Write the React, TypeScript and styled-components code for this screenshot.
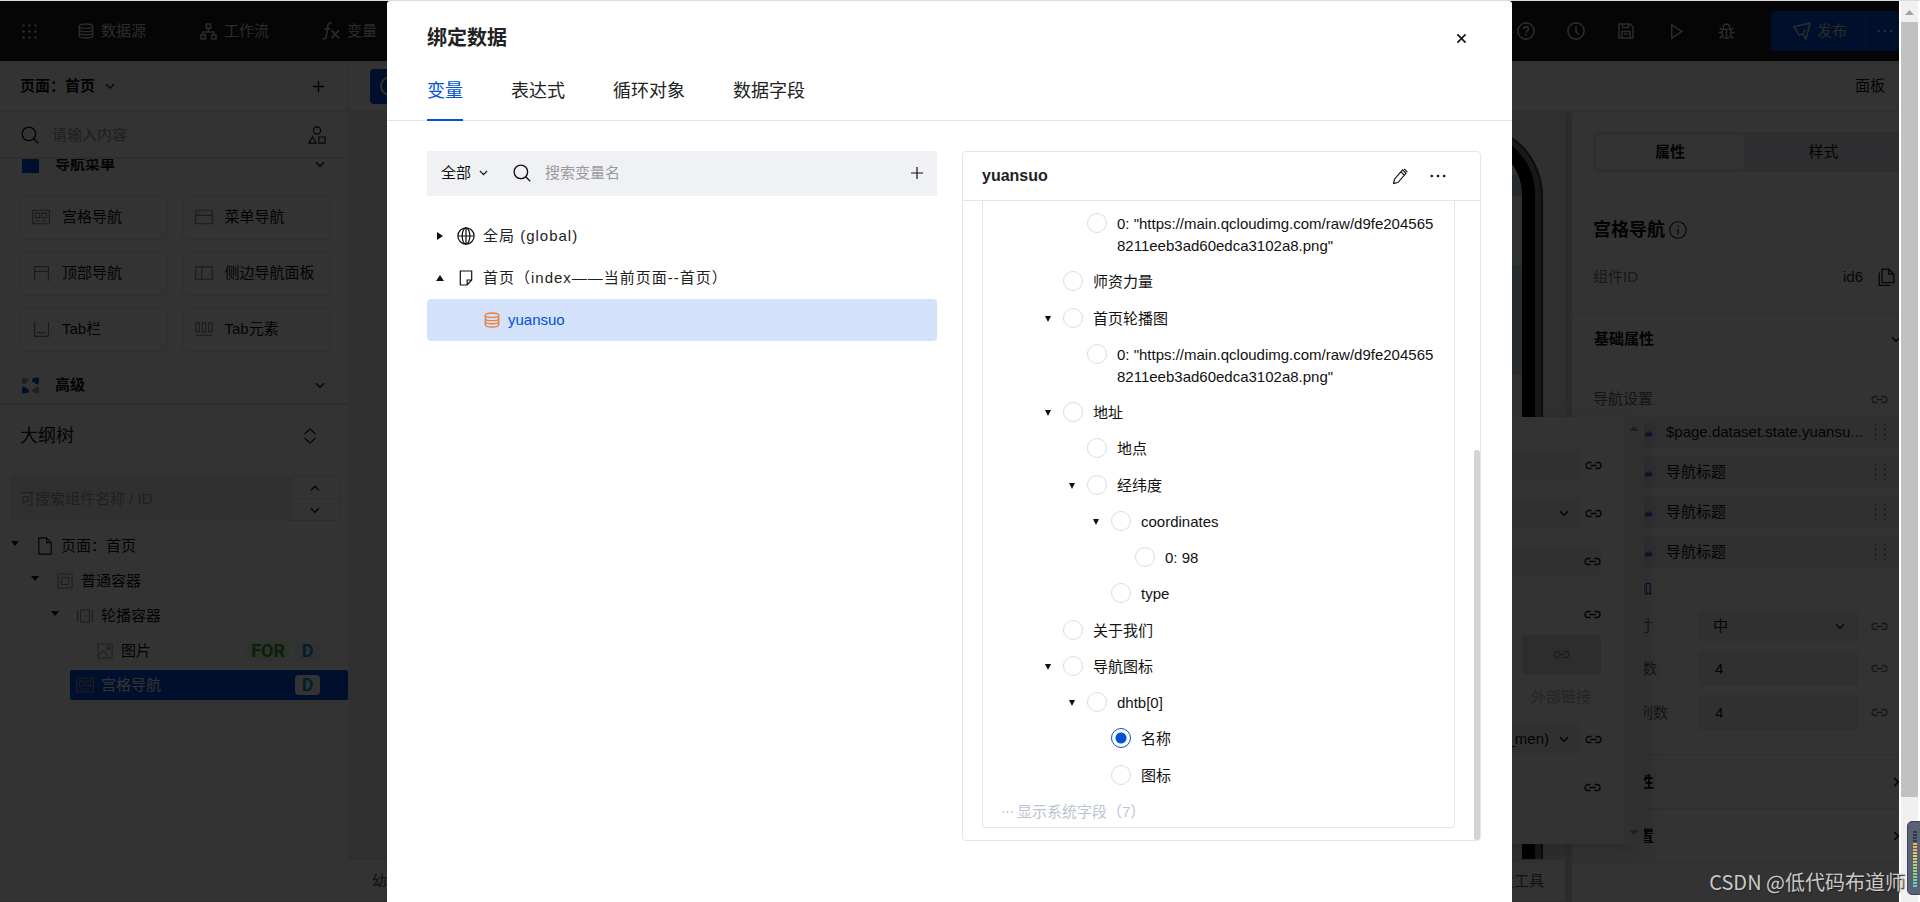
import React, { useState } from 'react';
import styled, { createGlobalStyle, css } from 'styled-components';

const sans = `"Liberation Sans", "Noto Sans CJK SC", sans-serif`;
const blue = '#0052d9';
const line = '#e3e5e9';

const GlobalStyle = createGlobalStyle`
  *, *::before, *::after { box-sizing: border-box; }
  body { margin: 0; font: 15px/22px ${sans}; color: #111; background: #fff; }
  button, input, select { font: inherit; color: inherit; margin: 0; }
  button { border: 0; padding: 0; background: none; display: inline-flex; align-items: center; cursor: pointer; }
  svg { display: block; flex: none; }
`;

/* ---------- icons ---------- */

const Svg = styled.svg.attrs({ fill: 'none', stroke: 'currentColor', 'aria-hidden': true })``;

type IconProps = { size?: number; w?: number };

const make = (body: React.ReactNode, base = 16, weight = 1.2) =>
  function Icon({ size = base, w = weight }: IconProps) {
    return (
      <Svg width={size} height={size} viewBox="0 0 16 16" strokeWidth={w}>
        {body}
      </Svg>
    );
  };

const ChevronDown = make(<path d="M3.5 6 8 10.5 12.500 6" />, 14, 1.6);
const ChevronUp = make(<path d="M3.500 10.500 8 6l4.500 4.500" />, 14, 1.6);
const ChevronRight = make(<path d="M6 3.500 10.500 8 6 12.500" />, 14, 1.8);
const PlusIcon = make(<path d="M8 2v12M2 8h12" />, 16);
const CloseIcon = make(<path d="m3 3 10 10M13 3 3 13" />, 13, 2);
const SearchIcon = make(<><circle cx="7" cy="7" r="6" /><path d="m11.300 11.300 4 4" /></>, 18, 1.2);
const DatabaseIcon = make(
  <>
    <ellipse cx="8" cy="3.200" rx="6.700" ry="2.200" />
    <path d="M1.300 3.200v9.600C1.300 14 4.300 15 8 15s6.700-1 6.700-2.200V3.200M1.300 6.400c0 1.200 3 2.200 6.700 2.200s6.700-1 6.700-2.200M1.300 9.600c0 1.200 3 2.200 6.700 2.200s6.700-1 6.700-2.200" />
  </>, 16, 1.4);
const FlowIcon = make(
  <>
    <path d="M6 1h4v4H6zM1 11h4v4H1zM11 11h4v4h-4zM8 5v3.500M3 11V8.500h10V11" />
  </>, 17, 1.5);
const FxIcon = make(
  <path d="M8.500 1C6.500.500 5.500 1.500 5.200 3.500L3.800 12.500C3.500 14.800 2.300 15.400.500 14.800M2 6h5.500M8.500 7.500l6.500 7M15 7.500l-6.500 7" />, 18, 1.5);
const ShapesIcon = make(
  <path d="M8 .800a3.200 3.200 0 1 1 0 6.400 3.200 3.200 0 0 1 0-6.400ZM.800 15.200 4 9.500l3.200 5.700ZM9.600 9.800h5.600v5.400H9.600Z" />, 18, 1);
const HelpIcon = make(
  <><circle cx="8" cy="8" r="7.200" /><path d="M5.800 6.500c0-1.500 1-2.200 2.200-2.200s2.200.800 2.200 2c0 1.500-2.200 1.700-2.200 3.300M8 10.700v1.500" /></>, 18, 1.4);
const ClockIcon = make(<><circle cx="8" cy="8" r="7.200" /><path d="M8 3.500v4.800l2.500 3" /></>, 18, 1.4);
const SaveIcon = make(<path d="M1 1h11l3 3v11H1ZM4.500 1v3.500h6V1M4 15V8.500h8V15M6 11h4" />, 16, 1.5);
const PlayIcon = make(<path d="M3.500 1.800 13 8l-9.500 6.200Z" />, 17, 1.4);
const BugIcon = make(
  <path d="M4 6h8v4.500a4 4 0 0 1-8 0ZM5 6V4a3 3 0 0 1 6 0v2M8 6v8.500M.500 9H4M12 9h3.500M1.500 4.500 4 6.500M14.500 4.500 12 6.500M1.500 14.500 4.500 12M14.500 14.500 11.500 12" />, 17, 1.3);
const SendIcon = make(<path d="M.800 4.300 15.200 1l-3.700 14-2.700-4.500L5.500 11.500ZM5.500 11.500 .800 4.300M8.800 10.500 11 6.500" />, 18, 1.4);
const InfoIcon = make(<><circle cx="8" cy="8" r="7.300" /><path d="M8 6.800v5.200M8 3.800v1.600" /></>, 18, 1);
const CopyIcon = make(<path d="M4.500 1H10.500l4.500 4.500V13H4.500ZM10.500 1v4.500H15M2 4v11.500h10" />, 18, 1.2);
const PageIcon = make(<path d="M2.500.800h7L13.500 5v10.200h-11ZM9.500.800V5h4" />, 18, 1);
const NoteIcon = make(<path d="M2.300 1h11.400v9l-4.500 5H2.300ZM9.200 15v-5h4.500" />, 16, 1.2);
const GlobeIcon = make(
  <><circle cx="8" cy="8" r="7.200" /><ellipse cx="8" cy="8" rx="3.400" ry="7.200" /><path d="M.800 8h14.400M8 .800v14.400" /></>, 18, 1.1);
const PencilIcon = make(<path d="m1.500 14.500.800-4L10 1.800l3.200 3.200-7.700 8.700-4 .8ZM11.500.900l3 3M8.500 3.600l3 3" />, 17, 1.1);
const BoxIcon = make(<path d="M1 1h14v14H1ZM4.500 4.500h7v7h-7Z" />, 16, 1.1);
const SlideIcon = make(<path d="M3.500 2h9v12h-9ZM.600 2v12M15.400 2v12" />, 16, 1.1);
const ImageIcon = make(<><path d="M1 1h14v14H1ZM1.500 13 6 7.500l5.500 6" /><circle cx="10.800" cy="5" r="1.800" /></>, 16, 1.1);
const GridNavIcon = make(<path d="M.600 2h14.800v12H.600ZM3 4.500h4v4H3ZM9 4.500h4v4H9ZM3 11.500h4M9 11.500h4" />, 18, 1);
const MenuNavIcon = make(<path d="M.600 2h14.800v12H.600ZM.600 6.500h14.800M3 4.200h1.200M5.500 4.200h1.200" />, 18, 1);
const TopNavIcon = make(<path d="M1.500 15V1.500h13V15M1.500 6h13" />, 17, 1.1);
const SideNavIcon = make(<path d="M.600 2.500h14.800v11H.600ZM6 2.500v11" />, 18, 1);
const TabBarIcon = make(<path d="M1.500 1v13.500h13V1M4 11h8" />, 17, 1.1);
const TabItemIcon = make(<path d="M.800 2.500h3v8h-3ZM6.500 2.500h3v8h-3ZM12.200 2.500h3v8h-3ZM.500 13.500h15" />, 18, 1);
const MountainIcon = make(<path d="M1 14 5 7l3 4 2.500-6L15 14ZM2 3h2" fill="currentColor" />, 9, 1);
const SortIcon = make(<path d="M2.500 6 8 1l5.500 5M2.500 10 8 15l5.500-5" />, 16, 1.2);

const DotsIcon = () => (
  <Svg width="17" height="17" viewBox="0 0 17 17">
    {[2, 8, 14].map(y => [2, 8, 14].map(x => (
      <circle key={`${x}-${y}`} cx={x + 0.5} cy={y + 0.5} r="1.200" fill="currentColor" stroke="none" />
    )))}
  </Svg>
);
const EllipsisIcon = ({ size = 16 }: IconProps) => (
  <Svg width={size} height="4" viewBox="0 0 16 4">
    <g fill="currentColor" stroke="none">
      <circle cx="1.800" cy="2" r="1.300" /><circle cx="8" cy="2" r="1.300" /><circle cx="14.200" cy="2" r="1.300" />
    </g>
  </Svg>
);
const LinkIcon = () => (
  <Svg width="17" height="9" viewBox="0 0 17 9" strokeWidth="1.300">
    <path d="M6.500 1.500H4a3 3 0 0 0 0 6h2.500M10.500 1.500H13a3 3 0 0 1 0 6h-2.500M5.500 4.500h6" />
  </Svg>
);
const DragIcon = () => (
  <Svg width="12" height="18" viewBox="0 0 12 18">
    {[1, 6, 11, 16].map(y => <path key={y} d={`M1 ${y}.500h1.200M10 ${y}.500h1.200`} strokeWidth="1.200" />)}
  </Svg>
);
const Triangle = ({ dir, w = 8, h = 5 }: { dir: 'down' | 'up' | 'right'; w?: number; h?: number }) => (
  <Svg width={w} height={h} viewBox="0 0 8 8" preserveAspectRatio="none">
    <path
      d={dir === 'down' ? 'M0 0h8L4 8Z' : dir === 'up' ? 'M0 8h8L4 0Z' : 'M0 0v8l8-4Z'}
      fill="currentColor"
      stroke="none"
    />
  </Svg>
);
const PinwheelIcon = () => (
  <Svg width="17" height="17" viewBox="0 0 17 17">
    <g stroke="none">
      <path d="M0 1.500Q0 .500 1 .500L6 2 7 3.500 3 7H1L0 6Z" fill="#8fa3c6" />
      <path d="M17 15.500q0 1-1 1L11 15l-1-1.500L14 10h2l1 1Z" fill="#8fa3c6" />
      <path d="M16 .500q1 0 1 1V6l-1 1.500-2-.500L10 4V2.500L11 1Z" fill={blue} />
      <path d="M1 16.500q-1 0-1-1V11L1 9.500l2 .500L7 13v1.500L6 16Z" fill={blue} />
    </g>
  </Svg>
);

/* ---------- page frame ---------- */

const Window = styled.div`
  display: grid;
  grid-template-columns: minmax(0, 1fr) 21px;
  min-height: 100vh;
  border-top: 1px solid #dcdcdc;
  position: relative;
  overflow: hidden;
`;

const Editor = styled.div`
  position: relative;
  display: flex;
  flex-direction: column;
  overflow: hidden;
`;

const TopBar = styled.header`
  display: flex;
  align-items: center;
  justify-content: space-between;
  height: 60px;
  padding-left: 21px;
  background: #191919;
  color: #d6d6d6;
`;

const TopGroup = styled.nav`
  display: flex;
  align-items: center;
  gap: 40px;
`;

const TopLink = styled.a`
  display: flex;
  align-items: center;
  gap: 7px;
  width: 82px;
  color: inherit;
  text-decoration: none;
  white-space: nowrap;
`;

const TopActions = styled.div`
  display: flex;
  align-items: center;
`;

const TopAction = styled.button`
  width: 50px;
  height: 40px;
  justify-content: center;
`;

const Publish = styled.button`
  height: 40px;
  width: 95px;
  margin-left: 20px;
  padding-left: 4px;
  justify-content: center;
  gap: 6px;
  background: ${blue};
  border-right: 1px solid #2a62c8;
  border-radius: 4px 0 0 4px;
`;

const PublishMore = styled.button`
  height: 40px;
  width: 33px;
  padding-left: 10px;
  background: ${blue};
  overflow: hidden;
`;

const Workspace = styled.div`
  flex: 1;
  display: grid;
  grid-template-columns: 348px minmax(0, 1fr);
`;

const Sidebar = styled.aside`
  background: #fff;
  display: flex;
  flex-direction: column;
  border-bottom: 1px solid ${line};
`;

const PageSelect = styled.div`
  display: flex;
  align-items: center;
  justify-content: space-between;
  height: 51px;
  padding: 0 21px 0 20px;
  border-bottom: 1px solid #e7e7e7;
  border-right: 1px solid #e7e7e7;
  font-weight: 700;
`;

const PageButton = styled.button`
  gap: 8px;
  font-weight: 700;
`;

const SearchLine = styled.label`
  display: flex;
  align-items: center;
  gap: 12px;
  height: 47px;
  padding: 0 22px 0 21px;
  border-bottom: 2px solid #e7e7e7;
`;

const PlainInput = styled.input`
  flex: 1;
  min-width: 0;
  padding: 0 1px;
  border: 0;
  outline: 0;
  background: transparent;
  &::placeholder { color: #9a9a9a; opacity: 1; }
`;

const Library = styled.section`
  height: 246px;
  padding: 0 18px 0 20px;
  overflow: hidden;
  border-bottom: 2px solid #e7e7e7;
`;

const LibraryScroll = styled.div`
  margin-top: -20px;
`;

const Category = styled.button`
  width: 100%;
  height: 50px;
  gap: 16px;
  padding: 0 3px 0 2px;
  font-weight: 700;
  span { flex: 1; text-align: left; }
`;

const MenuSwatch = styled.i`
  width: 17px;
  height: 18px;
  background: ${blue};
`;

const Cards = styled.div`
  display: grid;
  grid-template-columns: 1fr 1fr;
  gap: 12px 15px;
  padding: 7px 0 8px;
`;

const Card = styled.button`
  height: 44px;
  gap: 12px;
  padding: 0 0 2px 11px;
  border: 1px solid #e4e6ea;
  border-radius: 4px;
  white-space: nowrap;
  svg { color: #84878f; }
`;

const CardGlyph = styled.i`
  display: flex;
  justify-content: center;
  width: 18px;
`;

const OutlineHead = styled.div`
  display: flex;
  align-items: center;
  justify-content: space-between;
  height: 61px;
  padding: 1px 30px 0 20px;
  font-size: 18px;
`;

const OutlineSearch = styled.div`
  display: grid;
  grid-template-columns: 1fr 50px;
  height: 45px;
  margin: 10px 8px 7px 10px;
`;

const OutlineInput = styled.input`
  min-width: 0;
  padding: 0 10px;
  border: 0;
  border-radius: 4px 0 0 4px;
  background: #f1f1f1;
  &::placeholder { color: #9a9a9a; opacity: 1; }
`;

const Stepper = styled.div`
  display: grid;
  border: 1px solid #e0e0e0;
  button { justify-content: center; }
  button + button { border-top: 1px solid #e0e0e0; }
`;

const OutlineTree = styled.ul`
  list-style: none;
  margin: 0;
  padding: 0;
`;

const OutlineRow = styled.li<{ $level: number; $selected?: boolean }>`
  display: flex;
  align-items: center;
  height: ${p => (p.$selected ? 30 : 35)}px;
  gap: 7px;
  padding-right: 28px;
  padding-left: ${p => p.$level * 20 + 11}px;
  margin-top: ${p => (p.$selected ? 2 : 0)}px;
  ${p => p.$selected && css`
    margin-left: 70px;
    padding-left: 6px;
    background: ${blue};
    color: #fff;
    border-radius: 2px;
  `}
`;

const CaretSlot = styled.i`
  display: flex;
  width: 18px;
  margin-bottom: 4px;
`;

const OutlineName = styled.span`
  flex: 1;
`;

const OutlineGlyph = styled.i<{ $muted?: boolean }>`
  display: flex;
  justify-content: center;
  width: 18px;
  color: ${p => (p.$muted ? '#8b8f9a' : 'inherit')};
`;

const Tag = styled.b<{ $tone: 'green' | 'blue' | 'solid' }>`
  padding: 0 5px;
  min-width: 25px;
  text-align: center;
  line-height: 20px;
  font-family: "Liberation Sans Narrow", Roboto, sans-serif;
  font-size: 18px;
  border-radius: 4px;
  margin-left: -2px;
  color: ${p => (p.$tone === 'green' ? '#2ba52b' : '#0899d6')};
  background: ${p => (p.$tone === 'green' ? '#eef8ee' : p.$tone === 'blue' ? '#edf3fb' : '#fff')};
`;

/* ---------- canvas ---------- */

const Main = styled.div`
  display: grid;
  grid-template-rows: 51px minmax(0, 1fr);
  min-width: 0;
`;

const CanvasBar = styled.div`
  display: flex;
  align-items: center;
  justify-content: space-between;
  padding: 0 14px 0 22px;
  background: #fff;
  border-bottom: 1px solid #e7e7e7;
`;

const RunButton = styled.button`
  width: 120px;
  height: 35px;
  padding-left: 10px;
  border-radius: 4px;
  color: #fff;
  background: ${blue};
`;

const Split = styled.div`
  display: grid;
  grid-template-columns: minmax(0, 1fr) 6px 328px;
`;

const CanvasColumn = styled.div`
  display: grid;
  grid-template-rows: minmax(0, 1fr) 43px;
  background: #ededed;
`;

const Stage = styled.div`
  display: flex;
  justify-content: flex-end;
  padding: 12px 22px 0 0;
  overflow: hidden;
`;

const Phone = styled.div`
  width: 500px;
  border: 2px solid #3c3c46;
  border-bottom: 0;
  border-radius: 72px 72px 0 0;
  background: #777;
  padding: 6px 6px 0;
`;

const PhoneScreen = styled.div`
  height: 100%;
  border: solid #000;
  border-width: 13px 13px 0;
  border-radius: 62px 62px 0 0;
  background: linear-gradient(#fff 30px, #b9dbe0 30px 51px, #f4f8fa 51px 120px, #bfe0e4 120px 230px, #fafafa 230px);
`;

const Crumbs = styled.div`
  display: flex;
  align-items: center;
  justify-content: space-between;
  padding: 0 21px 0 24px;
  background: #fff;
  border-top: 1px solid #ddd;
  border-bottom: 1px solid ${line};
  color: #555;
`;

const Divider = styled.div`
  background: #dcdcdc;
  border-radius: 4px 4px 0 0;
`;

/* ---------- inspector ---------- */

const Inspector = styled.aside`
  position: relative;
  background: #fff;
  border-left: 1px solid #e7e7e7;
`;

const Segmented = styled.div`
  display: grid;
  grid-template-columns: 148px 1fr;
  height: 40px;
  margin: 20px 0 0 22px;
  padding: 3px 0 3px 2px;
  border-radius: 4px 0 0 4px;
  background: #e4e7ed;
`;

const Segment = styled.button<{ $active?: boolean }>`
  justify-content: center;
  border-radius: 3px;
  font-weight: ${p => (p.$active ? 700 : 400)};
  background: ${p => (p.$active ? '#fff' : 'transparent')};
  padding-left: ${p => (p.$active ? 0 : 4)}px;
`;

const InspectorTitle = styled.h2`
  display: flex;
  align-items: center;
  gap: 4px;
  height: 36px;
  margin: 40px 0 0 21px;
  font-size: 18px;
`;

const InfoRow = styled.div`
  display: flex;
  align-items: center;
  height: 66px;
  padding: 0 4px 8px 21px;
  gap: 14px;
  border-bottom: 1px solid #e7e7e7;
  color: #7a7a7a;
  span { flex: 1; }
  output, button { color: #222; }
`;

const SectionHead = styled.button<{ $folded?: boolean }>`
  display: flex;
  width: 100%;
  height: ${p => (p.$folded ? 54 : 50)}px;
  padding: 0 0 0 22px;
  justify-content: space-between;
  font-weight: 700;
  border-bottom: ${p => (p.$folded ? '1px solid #e7e7e7' : '0')};
  svg { margin-right: -4px; }
`;

const SettingHead = styled.div`
  display: flex;
  align-items: center;
  justify-content: space-between;
  height: 53px;
  padding: 17px 11px 0 21px;
  color: #6a6a6a;
`;

const NavList = styled.ul`
  list-style: none;
  display: grid;
  grid-template-columns: minmax(0, 1fr);
  gap: 10px;
  margin: 0;
  padding: 0 0 0 21px;
`;

const NavItem = styled.li`
  display: flex;
  align-items: center;
  height: 30px;
  padding: 0 13px 0 47px;
  background: #f0f0f0;
  white-space: nowrap;
  span { flex: 1; }
`;

const NavBadge = styled.i`
  display: flex;
  flex: none;
  align-items: center;
  justify-content: center;
  width: 16px;
  height: 16px;
  margin-right: 10px;
  border-radius: 8px;
  color: #3d63d8;
  background: #dfe7f7;
`;

const AddLink = styled.button`
  height: 44px;
  padding-left: 50px;
  color: ${blue};
`;

const FormRow = styled.label<{ $tall?: boolean }>`
  display: grid;
  grid-template-columns: 106px minmax(0, 1fr) 17px;
  align-items: center;
  margin-bottom: ${p => (p.$tall ? 9 : 10)}px;
  padding: 0 11px 0 21px;
  color: #6a6a6a;
  white-space: nowrap;
`;

const Control = styled.span<{ $tall?: boolean }>`
  position: relative;
  display: flex;
  align-items: center;
  margin-right: 13px;
  height: ${p => (p.$tall ? 35 : 30)}px;
  color: #111;
  background: #f1f1f1;
  border: 1px solid #ebebeb;
  input, select {
    width: 100%;
    height: 100%;
    padding: 0 15px;
    border: 0;
    background: transparent;
    appearance: none;
  }
  select { padding: 0 13px; }
  svg { position: absolute; right: 10px; }
`;

const FormEnd = styled.div`
  height: 16px;
  border-bottom: 1px solid #e7e7e7;
`;

/* ---------- floating settings panel ---------- */

const Popover = styled.div`
  position: absolute;
  top: 305px;
  right: 255px;
  display: grid;
  grid-template-columns: 229px 21px;
  height: 427px;
  background: #fff;
  box-shadow: 0 8px 24px rgba(0, 0, 0, 0.18);
`;

const PopBody = styled.div`
  padding: 33px 22px 0 0;
`;

const PopRow = styled.div<{ $tall?: boolean; $bare?: boolean }>`
  display: flex;
  align-items: center;
  justify-content: flex-end;
  gap: 5px;
  height: ${p => (p.$tall ? 40 : 30)}px;
  margin-bottom: ${p => (p.$tall ? 0 : 18)}px;
  margin-right: ${p => (p.$bare ? 0 : -1)}px;
`;

const PopField = styled.span<{ $wide?: boolean }>`
  flex: 1;
  display: flex;
  align-items: center;
  justify-content: flex-end;
  gap: 8px;
  height: 30px;
  padding-right: ${p => (p.$wide ? 0 : 9)}px;
  border-radius: 0 4px 4px 0;
  background: #efefef;
`;

const PopButton = styled.button`
  width: 79px;
  height: 39px;
  justify-content: center;
  background: #dfdfdf;
  border-radius: 3px;
  color: #888;
`;

const PopCaption = styled.div`
  margin: 12px 10px 16px 0;
  text-align: right;
  color: #b5b5b5;
`;

const PopScroll = styled.div`
  display: flex;
  flex-direction: column;
  align-items: center;
  justify-content: space-between;
  padding: 9px 0;
  background: #f0f0f0;
  color: #9a9a9a;
`;

/* ---------- dialog ---------- */

const Backdrop = styled.div`
  position: absolute;
  inset: 0;
  display: flex;
  justify-content: center;
  background: rgba(0, 0, 0, 0.8);
`;

const Dialog = styled.section`
  display: flex;
  flex-direction: column;
  width: 1125px;
  max-width: 100%;
  background: #fff;
  border-radius: 3px 3px 0 0;
`;

const DialogHead = styled.header`
  display: flex;
  align-items: center;
  justify-content: space-between;
  height: 72px;
  padding: 2px 44px 0 40px;
`;

const DialogTitle = styled.h1`
  margin: 0;
  font-size: 20px;
  color: #222;
`;

const Tabs = styled.div`
  display: flex;
  gap: 48px;
  height: 48px;
  padding: 0 40px;
  border-bottom: 1px solid ${line};
`;

const Tab = styled.button<{ $active: boolean }>`
  height: 48px;
  padding-bottom: 11px;
  font-size: 18px;
  line-height: 24px;
  color: ${p => (p.$active ? blue : '#222')};
  border-bottom: 2px solid ${p => (p.$active ? blue : 'transparent')};
`;

const Columns = styled.div`
  flex: 1;
  display: grid;
  grid-template-columns: minmax(0, 510fr) minmax(0, 519fr);
  gap: 25px;
  padding: 30px 31px 61px 40px;
`;

const FilterBar = styled.div`
  display: flex;
  align-items: center;
  height: 45px;
  padding: 0 12px 2px 14px;
  background: #f0f1f5;
`;

const ScopeSelect = styled.label`
  position: relative;
  display: flex;
  align-items: center;
  width: 54px;
  margin-right: 18px;
  select {
    width: 100%;
    padding: 0;
    border: 0;
    background: transparent;
    appearance: none;
  }
  svg { position: absolute; right: 5px; pointer-events: none; }
`;

const FilterSearch = styled.label`
  flex: 1;
  display: flex;
  align-items: center;
  gap: 13px;
`;

const ScopeTree = styled.ul`
  list-style: none;
  margin: 19px 0 0;
  padding: 0;
`;

const ScopeRow = styled.li<{ $selected?: boolean }>`
  display: flex;
  align-items: center;
  gap: 8px;
  height: 42px;
  padding-left: ${p => (p.$selected ? 57 : 9)}px;
  border-radius: 4px;
  letter-spacing: ${p => (p.$selected ? 'normal' : '1px')};
  color: ${p => (p.$selected ? blue : '#222')};
  background: ${p => (p.$selected ? '#d3e1fa' : 'transparent')};
  svg { color: ${p => (p.$selected ? '#ed8139' : '#111')}; }
`;

const ScopeCaret = styled.i`
  display: flex;
  justify-content: center;
  width: 8px;
  margin-right: 5px;
`;

const ScopeGlyph = styled.i`
  display: flex;
  justify-content: center;
  width: 18px;
`;

const Detail = styled.section`
  display: flex;
  flex-direction: column;
  border: 1px solid ${line};
  border-radius: 4px;
`;

const DetailHead = styled.header`
  display: flex;
  align-items: center;
  gap: 21px;
  height: 49px;
  padding: 0 34px 0 19px;
  border-bottom: 1px solid ${line};
  h2 { flex: 1; margin: 0; font-size: 16px; color: #222; }
`;

const DetailBody = styled.div`
  flex: 1;
  display: grid;
  grid-template-columns: minmax(0, 1fr) 6px;
  column-gap: 19px;
  padding-left: 19px;
`;

const FieldTree = styled.ul`
  list-style: none;
  display: flex;
  flex-direction: column;
  justify-content: space-between;
  margin: 0 0 12px;
  padding: 12px 18px 4px 19px;
  border: 1px solid ${line};
  border-top: 0;
  border-radius: 0 0 4px 4px;
`;

const FieldRow = styled.li<{ $level: number }>`
  display: flex;
  gap: 12px;
  padding-left: ${p => 43 + p.$level * 24}px;
`;

const FieldCaret = styled.i`
  display: flex;
  flex: none;
  align-items: center;
  width: 6px;
  height: 22px;
`;

const FieldLabel = styled.label`
  display: flex;
  gap: 10px;
  word-break: break-all;
`;

const Radio = styled.input.attrs({ type: 'radio' })`
  flex: none;
  width: 20px;
  height: 20px;
  border: 1px solid #d9dde8;
  border-radius: 10px;
  appearance: none;
  background: #fff;
  &:checked {
    border-color: ${blue};
    background: radial-gradient(circle, ${blue} 5px, #fff 6px);
  }
`;

const SystemRow = styled.li`
  display: flex;
`;

const SystemFields = styled.button`
  gap: 4px;
  color: #bcc4d4;
`;

const ScrollTrack = styled.div`
  display: flex;
  align-items: flex-end;
`;

const ScrollThumb = styled.div`
  width: 6px;
  height: 61%;
  border-radius: 4px;
  background: #d4d4d6;
`;

/* ---------- window scroll bar and desktop extras ---------- */

const PageScroll = styled.div`
  display: flex;
  flex-direction: column;
  background: #f0f0f0;
  border: solid #fff;
  border-width: 0 2px;
  color: #a3a3a3;
`;

const PageScrollArrow = styled.div`
  display: flex;
  justify-content: center;
  padding: 9px 0 7px;
`;

const PageScrollThumb = styled.div`
  height: 86%;
  background: #c1c1c1;
`;

const Meter = styled.div`
  position: absolute;
  right: -4px;
  bottom: 7px;
  width: 17px;
  height: 74px;
  padding: 9px 6px 7px 5px;
  border-radius: 5px;
  border: 1px solid #3d4355;
  background: #5a6175;
`;

const MeterBars = styled.div`
  height: 100%;
  background:
    repeating-linear-gradient(transparent 0 2px, #5a6175 2px 3px),
    linear-gradient(#333847 12px, #e8b05a 12px 18px, #e3cf55 24px, #a5d86a 36px, #58d6b4);
`;

const Watermark = styled.div`
  position: absolute;
  right: 15px;
  bottom: 6px;
  font: 20px/28px "Noto Sans CJK SC", sans-serif;
  color: #c9c9c9;
  text-shadow: 1px 1px 1px #222;
`;

/* ---------- data ---------- */

const components = [
  { name: '宫格导航', Icon: GridNavIcon },
  { name: '菜单导航', Icon: MenuNavIcon },
  { name: '顶部导航', Icon: TopNavIcon },
  { name: '侧边导航面板', Icon: SideNavIcon },
  { name: 'Tab栏', Icon: TabBarIcon },
  { name: 'Tab元素', Icon: TabItemIcon },
];

const imageUrl = '0: "https://main.qcloudimg.com/raw/d9fe2045658211eeb3ad60edca3102a8.png"';

const fields: { id: string; text: string; level: number; open?: boolean }[] = [
  { id: 'img0', text: imageUrl, level: 1 },
  { id: 'szll', text: '师资力量', level: 0 },
  { id: 'sylbt', text: '首页轮播图', level: 0, open: true },
  { id: 'sylbt0', text: imageUrl, level: 1 },
  { id: 'dz', text: '地址', level: 0, open: true },
  { id: 'dd', text: '地点', level: 1 },
  { id: 'jwd', text: '经纬度', level: 1, open: true },
  { id: 'coordinates', text: 'coordinates', level: 2, open: true },
  { id: 'coordinates0', text: '0: 98', level: 3 },
  { id: 'type', text: 'type', level: 2 },
  { id: 'gywm', text: '关于我们', level: 0 },
  { id: 'dhtb', text: '导航图标', level: 0, open: true },
  { id: 'dhtb0', text: 'dhtb[0]', level: 1, open: true },
  { id: 'mc', text: '名称', level: 2 },
  { id: 'tb', text: '图标', level: 2 },
];

const tabs = ['变量', '表达式', '循环对象', '数据字段'];
const navItems = ['$page.dataset.state.yuansu...', '导航标题', '导航标题', '导航标题'];

/* ---------- sections ---------- */

function LeftPanel() {
  return (
    <Sidebar>
      <PageSelect>
        <PageButton>页面：首页 <ChevronDown w={1.4} /></PageButton>
        <button aria-label="新建页面"><PlusIcon size={15} w={1.5} /></button>
      </PageSelect>
      <SearchLine>
        <SearchIcon />
        <PlainInput placeholder="请输入内容" aria-label="搜索组件" />
        <ShapesIcon />
      </SearchLine>
      <Library>
        <LibraryScroll>
          <Category><MenuSwatch /><span>导航菜单</span><ChevronDown /></Category>
          <Cards>
            {components.map(({ name, Icon }) => (
              <Card key={name}><CardGlyph><Icon /></CardGlyph>{name}</Card>
            ))}
          </Cards>
          <Category><PinwheelIcon /><span>高级</span><ChevronDown /></Category>
        </LibraryScroll>
      </Library>
      <OutlineHead>
        大纲树
        <button aria-label="折叠"><SortIcon /></button>
      </OutlineHead>
      <OutlineSearch>
        <OutlineInput placeholder="可搜索组件名称 / ID" aria-label="搜索大纲树" />
        <Stepper>
          <button aria-label="上一个"><ChevronUp /></button>
          <button aria-label="下一个"><ChevronDown /></button>
        </Stepper>
      </OutlineSearch>
      <OutlineTree>
        <OutlineRow $level={0}>
          <CaretSlot><Triangle dir="down" /></CaretSlot>
          <OutlineGlyph><PageIcon /></OutlineGlyph>
          <OutlineName>页面：首页</OutlineName>
        </OutlineRow>
        <OutlineRow $level={1}>
          <CaretSlot><Triangle dir="down" /></CaretSlot>
          <OutlineGlyph $muted><BoxIcon /></OutlineGlyph>
          <OutlineName>普通容器</OutlineName>
        </OutlineRow>
        <OutlineRow $level={2}>
          <CaretSlot><Triangle dir="down" /></CaretSlot>
          <OutlineGlyph $muted><SlideIcon /></OutlineGlyph>
          <OutlineName>轮播容器</OutlineName>
        </OutlineRow>
        <OutlineRow $level={3}>
          <CaretSlot />
          <OutlineGlyph $muted><ImageIcon /></OutlineGlyph>
          <OutlineName>图片</OutlineName>
          <Tag $tone="green">FOR</Tag>
          <Tag $tone="blue">D</Tag>
        </OutlineRow>
        <OutlineRow $level={2} $selected>
          <OutlineGlyph $muted><GridNavIcon /></OutlineGlyph>
          <OutlineName>宫格导航</OutlineName>
          <Tag $tone="solid">D</Tag>
        </OutlineRow>
      </OutlineTree>
    </Sidebar>
  );
}

function SettingsPopover() {
  return (
    <Popover>
      <PopBody>
        <PopRow><PopField /><LinkIcon /></PopRow>
        <PopRow><PopField><ChevronDown /></PopField><LinkIcon /></PopRow>
        <PopRow $bare><PopField $wide><LinkIcon /></PopField></PopRow>
        <PopRow $tall $bare><LinkIcon /></PopRow>
        <PopRow $tall $bare><PopButton aria-label="外部链接"><LinkIcon /></PopButton></PopRow>
        <PopCaption>外部链接</PopCaption>
        <PopRow><PopField>(xue_xiao_bu_men)<ChevronDown /></PopField><LinkIcon /></PopRow>
        <PopRow $bare><LinkIcon /></PopRow>
      </PopBody>
      <PopScroll>
        <Triangle dir="up" w={10} h={5} />
        <Triangle dir="down" w={10} h={5} />
      </PopScroll>
    </Popover>
  );
}

function InspectorPanel() {
  return (
    <Inspector>
      <Segmented>
        <Segment $active>属性</Segment>
        <Segment>样式</Segment>
      </Segmented>
      <InspectorTitle>宫格导航 <InfoIcon /></InspectorTitle>
      <InfoRow>
        <span>组件ID</span>
        <output>id6</output>
        <button aria-label="复制"><CopyIcon /></button>
      </InfoRow>
      <SectionHead>基础属性 <ChevronDown /></SectionHead>
      <SettingHead>导航设置 <LinkIcon /></SettingHead>
      <NavList>
        {navItems.map((name, i) => (
          <NavItem key={i}>
            <NavBadge><MountainIcon /></NavBadge>
            <span>{name}</span>
            <DragIcon />
          </NavItem>
        ))}
      </NavList>
      <AddLink>添加</AddLink>
      <FormRow>
        图标尺寸
        <Control>
          <select defaultValue="中"><option>中</option></select>
          <ChevronDown />
        </Control>
        <LinkIcon />
      </FormRow>
      <FormRow $tall>
        展示 行数
        <Control $tall><input defaultValue="4" /></Control>
        <LinkIcon />
      </FormRow>
      <FormRow $tall>
        每行的列数
        <Control $tall><input defaultValue="4" /></Control>
        <LinkIcon />
      </FormRow>
      <FormEnd />
      <SectionHead $folded>高级属性 <ChevronRight /></SectionHead>
      <SectionHead $folded>通用设置 <ChevronRight /></SectionHead>
      <SettingsPopover />
    </Inspector>
  );
}

function BindDialog() {
  const [tab, setTab] = useState('变量');
  const [field, setField] = useState('mc');
  return (
    <Backdrop>
      <Dialog role="dialog" aria-labelledby="bind-title">
        <DialogHead>
          <DialogTitle id="bind-title">绑定数据</DialogTitle>
          <button aria-label="关闭"><CloseIcon /></button>
        </DialogHead>
        <Tabs role="tablist">
          {tabs.map(t => (
            <Tab key={t} role="tab" aria-selected={t === tab} $active={t === tab} onClick={() => setTab(t)}>
              {t}
            </Tab>
          ))}
        </Tabs>
        <Columns>
          <div>
            <FilterBar>
              <ScopeSelect>
                <select aria-label="范围" defaultValue="全部"><option>全部</option></select>
                <ChevronDown size={13} w={1.5} />
              </ScopeSelect>
              <FilterSearch>
                <SearchIcon />
                <PlainInput placeholder="搜索变量名" aria-label="搜索变量名" />
              </FilterSearch>
              <button aria-label="新建变量"><PlusIcon /></button>
            </FilterBar>
            <ScopeTree>
              <ScopeRow>
                <ScopeCaret><Triangle dir="right" w={6} h={8} /></ScopeCaret>
                <ScopeGlyph><GlobeIcon /></ScopeGlyph>
                全局 (global)
              </ScopeRow>
              <ScopeRow>
                <ScopeCaret><Triangle dir="up" w={8} h={6} /></ScopeCaret>
                <ScopeGlyph><NoteIcon /></ScopeGlyph>
                首页（index——当前页面--首页）
              </ScopeRow>
              <ScopeRow $selected>
                <DatabaseIcon />
                yuansuo
              </ScopeRow>
            </ScopeTree>
          </div>
          <Detail>
            <DetailHead>
              <h2>yuansuo</h2>
              <button aria-label="编辑"><PencilIcon /></button>
              <button aria-label="更多"><EllipsisIcon /></button>
            </DetailHead>
            <DetailBody>
              <FieldTree>
                {fields.map(f => (
                  <FieldRow key={f.id} $level={f.level}>
                    <FieldCaret>{f.open && <Triangle dir="down" w={6} h={6} />}</FieldCaret>
                    <FieldLabel>
                      <Radio name="field" checked={field === f.id} onChange={() => setField(f.id)} />
                      {f.text}
                    </FieldLabel>
                  </FieldRow>
                ))}
                <SystemRow>
                  <SystemFields><EllipsisIcon size={11} />显示系统字段（7）</SystemFields>
                </SystemRow>
              </FieldTree>
              <ScrollTrack><ScrollThumb /></ScrollTrack>
            </DetailBody>
          </Detail>
        </Columns>
      </Dialog>
    </Backdrop>
  );
}

export default function App() {
  return (
    <>
      <GlobalStyle />
      <Window>
        <Editor>
          <TopBar>
            <TopGroup>
              <DotsIcon />
              <TopLink href="#data"><DatabaseIcon />数据源</TopLink>
              <TopLink href="#flow"><FlowIcon />工作流</TopLink>
              <TopLink href="#vars"><FxIcon />变量</TopLink>
            </TopGroup>
            <TopActions>
              <TopAction aria-label="帮助"><HelpIcon /></TopAction>
              <TopAction aria-label="历史"><ClockIcon /></TopAction>
              <TopAction aria-label="保存"><SaveIcon /></TopAction>
              <TopAction aria-label="预览"><PlayIcon /></TopAction>
              <TopAction aria-label="调试"><BugIcon /></TopAction>
              <Publish><SendIcon />发布</Publish>
              <PublishMore aria-label="更多发布选项"><EllipsisIcon size={18} /></PublishMore>
            </TopActions>
          </TopBar>
          <Workspace>
            <LeftPanel />
            <Main>
              <CanvasBar>
                <RunButton aria-label="编辑"><ClockIcon size={20} /></RunButton>
                <button>面板</button>
              </CanvasBar>
              <Split>
                <CanvasColumn>
                  <Stage><Phone><PhoneScreen /></Phone></Stage>
                  <Crumbs><span>幼儿园</span><span>开发工具</span></Crumbs>
                </CanvasColumn>
                <Divider />
                <InspectorPanel />
              </Split>
            </Main>
          </Workspace>
          <BindDialog />
        </Editor>
        <PageScroll>
          <PageScrollArrow><Triangle dir="up" w={9} h={5} /></PageScrollArrow>
          <PageScrollThumb />
        </PageScroll>
        <Meter><MeterBars /></Meter>
        <Watermark>CSDN @低代码布道师</Watermark>
      </Window>
    </>
  );
}
